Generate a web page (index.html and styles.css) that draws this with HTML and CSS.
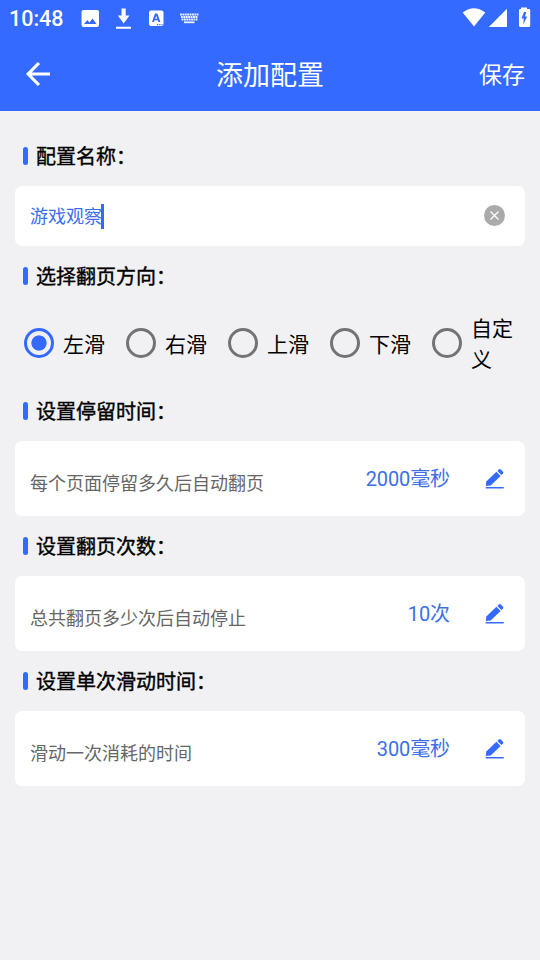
FILE: index.html
```html
<!DOCTYPE html>
<html lang="zh-CN">
<head>
<meta charset="utf-8">
<title>添加配置</title>
<link rel="stylesheet" href="styles.css">
</head>
<body>
<svg class="defs" width="0" height="0" aria-hidden="true">
  <symbol id="edit" viewBox="0 0 20 22">
    <path d="M.8 18 1.300 13.600 11.400 3.800l4.200 4.200-9.900 9.500z"/>
    <path d="m12.300 3 1.600-1.500q1-.8 1.900 0l2.200 2.200q.8.900 0 1.800l-1.500 1.600z"/>
    <path d="M.7 19h18v1.500H.7z"/>
  </symbol>
</svg>
<header class="top">
  <div class="status">
    <span class="clock">10:48</span>
    <svg class="notices" width="120" height="24" viewBox="80 6 120 24" fill="#fff">
      <path fill-rule="evenodd" d="M83.500 10H97q2 0 2 2v13q0 2-2 2H83.500q-2 0-2-2V12q0-2 2-2zM84 24h12.500l-4-5.500-3 4-2.200-2.500z"/>
      <path d="M121.500 8.500h4.200v7h3.800l-5.900 8-5.700-8h3.600zM116 26.800h15v2h-15z"/>
      <path fill-rule="evenodd" d="M151 10.500h10.500q2 0 2 2v11.500q0 2-2 2H151q-2 0-2-2V12.500q0-2 2-2zM155 13.500l-3 8.500h2l.6-1.800h3.200l.6 1.800h2l-3-8.500zm1.200 2.300 1 2.900h-2zM157 24h1.200v1.200H157zm2.200 0h1.200v1.200h-1.200zm2.200 0h1v1.200h-1z"/>
      <g fill="none" stroke="#fff" stroke-opacity=".9" stroke-width="1.800">
        <path stroke-dasharray="1.900 .5" d="M180 14.500h18.500M181 17h17"/>
        <path stroke-dasharray="1.900 .5" d="M181.500 19.500h16"/>
        <path d="M184 22.300h10.500"/>
      </g>
    </svg>
    <svg class="system" width="70" height="24" viewBox="462 5 70 24" fill="#fff">
      <path d="M462.700 12.500q11.300-8.500 22.600 0L474 26.500z"/>
      <path d="M507 8.800V27h-18.200z"/>
      <path fill-rule="evenodd" d="M521 7.500h6V9h2q1.200 0 1.200 1.200v15.300q0 1.500-1.500 1.500h-8.200q-1.500 0-1.500-1.500V10.200Q519 9 520.200 9h.8zM524 12l-2.500 6.500h2.300l-.6 6 4-8h-2.300l1.400-4.500z"/>
    </svg>
  </div>
  <nav class="bar">
    <svg class="back" width="26" height="26" viewBox="0 0 26 26" fill="none" stroke="#fff" stroke-width="3.200"><path d="M13.900 2 3.200 13l10.700 11M3 13h22"/></svg>
    <h1>添加配置</h1>
    <span class="save">保存</span>
  </nav>
</header>
<main>
  <h2>配置名称：</h2>
  <div class="card name">
    <span class="input">游戏观察</span>
    <svg width="22" height="22" viewBox="0 0 22 22"><circle cx="10.500" cy="10.500" r="10.500" fill="#aaa"/><path d="m6.500 6.500 8 8m0-8-8 8" stroke="#fff" stroke-width="1.300"/></svg>
  </div>
  <h2>选择翻页方向：</h2>
  <div class="radios">
    <label><i class="radio on"></i><span>左滑</span></label>
    <label><i class="radio"></i><span>右滑</span></label>
    <label><i class="radio"></i><span>上滑</span></label>
    <label><i class="radio"></i><span>下滑</span></label>
    <label class="custom"><i class="radio"></i><span>自定义</span></label>
  </div>
  <h2>设置停留时间：</h2>
  <div class="card setting">
    <span class="hint">每个页面停留多久后自动翻页</span>
    <span class="value">2000毫秒</span>
    <svg class="edit" width="20" height="22"><use href="#edit"/></svg>
  </div>
  <h2>设置翻页次数：</h2>
  <div class="card setting">
    <span class="hint">总共翻页多少次后自动停止</span>
    <span class="value">10次</span>
    <svg class="edit" width="20" height="22"><use href="#edit"/></svg>
  </div>
  <h2>设置单次滑动时间：</h2>
  <div class="card setting">
    <span class="hint">滑动一次消耗的时间</span>
    <span class="value">300毫秒</span>
    <svg class="edit" width="20" height="22"><use href="#edit"/></svg>
  </div>
</main>
</body>
</html>
```
FILE: styles.css
```css
* { box-sizing: border-box; }
body {
  margin: 0;
  min-height: 960px;
  background: #f1f1f4;
  color: #000;
  font-family: Roboto, "Noto Sans CJK SC", sans-serif;
}
svg { display: block; flex: none; }
.defs { position: absolute; }
.top { height: 111px; background: #346aff; color: #fff; }
.status {
  height: 36px;
  display: flex;
  align-items: center;
  padding: 0 8px 0 9px;
}
.clock {
  width: 71px;
  font-size: 21.5px;
  font-weight: 500;
  line-height: 36px;
  padding-top: 2px;
}
.system { margin: -2px 0 0 auto; }
.bar {
  height: 75px;
  display: grid;
  grid-template-columns: 1fr auto 1fr;
  align-items: center;
  padding: 0 15px 0 25px;
}
h1 {
  margin: 0 10px 0 0;
  padding-top: 4px;
  font-size: 27px;
  font-weight: 400;
  line-height: 40px;
}
.save { justify-self: end; padding-top: 4px; font-size: 23px; line-height: 34px; }
main { padding: 15px; }
h2 {
  margin: 0;
  height: 60px;
  display: flex;
  align-items: center;
  padding-left: 8px;
  font-size: 20px;
  line-height: 32px;
  font-weight: 400;
  -webkit-text-stroke: 0.4px #000;
}
h2::before {
  content: "";
  width: 5px;
  height: 18px;
  margin-right: 8px;
  border-radius: 2.5px;
  background: #346aff;
}
.card {
  display: flex;
  align-items: center;
  background: #fff;
  border-radius: 7px;
}
.name { height: 60px; padding: 0 19px 0 15px; justify-content: space-between; }
.input {
  color: #3c6fee;
  font-size: 18px;
  line-height: 25px;
  border-right: 3px solid #346aff;
  width: 74px;
  white-space: nowrap;
}
.radios { height: 75px; display: grid; grid-template-columns: repeat(5, 102px); }
.radios label {
  display: flex;
  align-items: center;
  padding-left: 9px;
  font-size: 21px;
  line-height: 31px;
}
.radios span { flex: 1; padding-top: 4px; }
.radio {
  flex: none;
  width: 30px;
  height: 30px;
  margin: -1px 9px 0 0;
  border: 3px solid #737373;
  border-radius: 50%;
}
.radio.on {
  border-color: #346aff;
  background: radial-gradient(circle, #346aff 7.2px, transparent 8px);
}
.radios .custom span { padding-top: 2px; }
.setting { height: 75px; padding: 0 20px 0 15px; }
.hint { color: #666; font-size: 18px; line-height: 26px; padding-top: 10px; }
.value { margin-left: auto; color: #3c6fe8; font-size: 20px; line-height: 30px; letter-spacing: -0.1px; padding-top: 1px; }
.edit { margin-left: 35px; fill: #346aff; }
h2 { padding-top: 1px; }
h2::before { margin-top: -1px; }
```
